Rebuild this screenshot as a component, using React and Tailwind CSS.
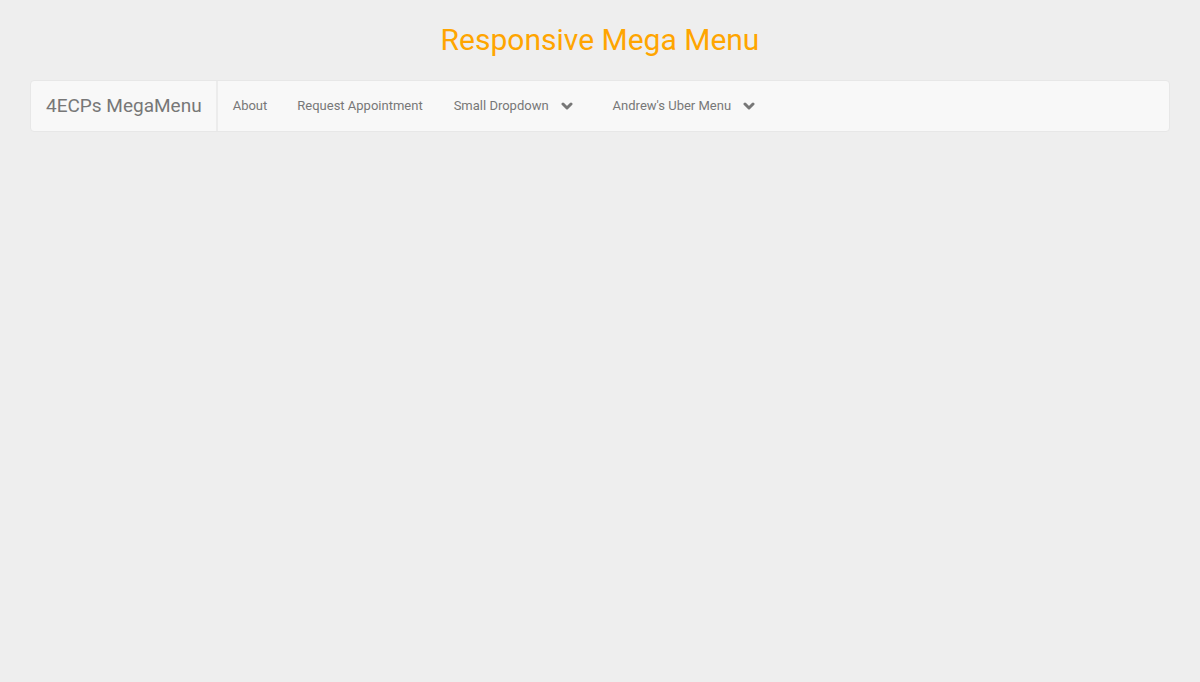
const links = [
  { label: "About" },
  { label: "Request Appointment" },
  { label: "Small Dropdown", dropdown: true },
  { label: "Andrew's Uber Menu", dropdown: true },
];

// heavy chevron like the old font-awesome caret
function Chevron() {
  return (
    <svg width="12" height="9" viewBox="0 0 12 9" className="ml-[12px]" aria-hidden="true">
      <polyline
        points="2,2 6,6 10,2"
        fill="none"
        stroke="currentColor"
        strokeWidth="3"
        strokeLinecap="round"
        strokeLinejoin="round"
      />
    </svg>
  );
}

function NavItem({ label, dropdown }) {
  return (
    <a
      href="#"
      className={`flex items-center text-[13px] text-[#777] hover:text-[#333] ${dropdown ? "pl-[16px] pr-[24px]" : "px-[15px]"}`}
    >
      {label}
      {dropdown && <Chevron />}
    </a>
  );
}

export default function App() {
  return (
    <div
      className="min-h-screen bg-[#eeeeee] px-[30px]"
      style={{ fontFamily: "Roboto, 'Liberation Sans', sans-serif" }}
    >
      <h1 className="pt-[20px] pb-[21px] text-center text-[30px] leading-[39px] text-[#ffa500]">
        Responsive Mega Menu
      </h1>

      <nav className="flex h-[52px] rounded-[4px] border border-[#e7e7e7] bg-[#f8f8f8]">
        <a
          href="#"
          className="flex items-center border-r-2 border-[#ececec] pl-[15px] pr-[14px] text-[19px] text-[#777]"
        >
          4ECPs MegaMenu
        </a>
        <div className="flex">
          {links.map((link) => (
            <NavItem key={link.label} {...link} />
          ))}
        </div>
      </nav>
    </div>
  );
}
